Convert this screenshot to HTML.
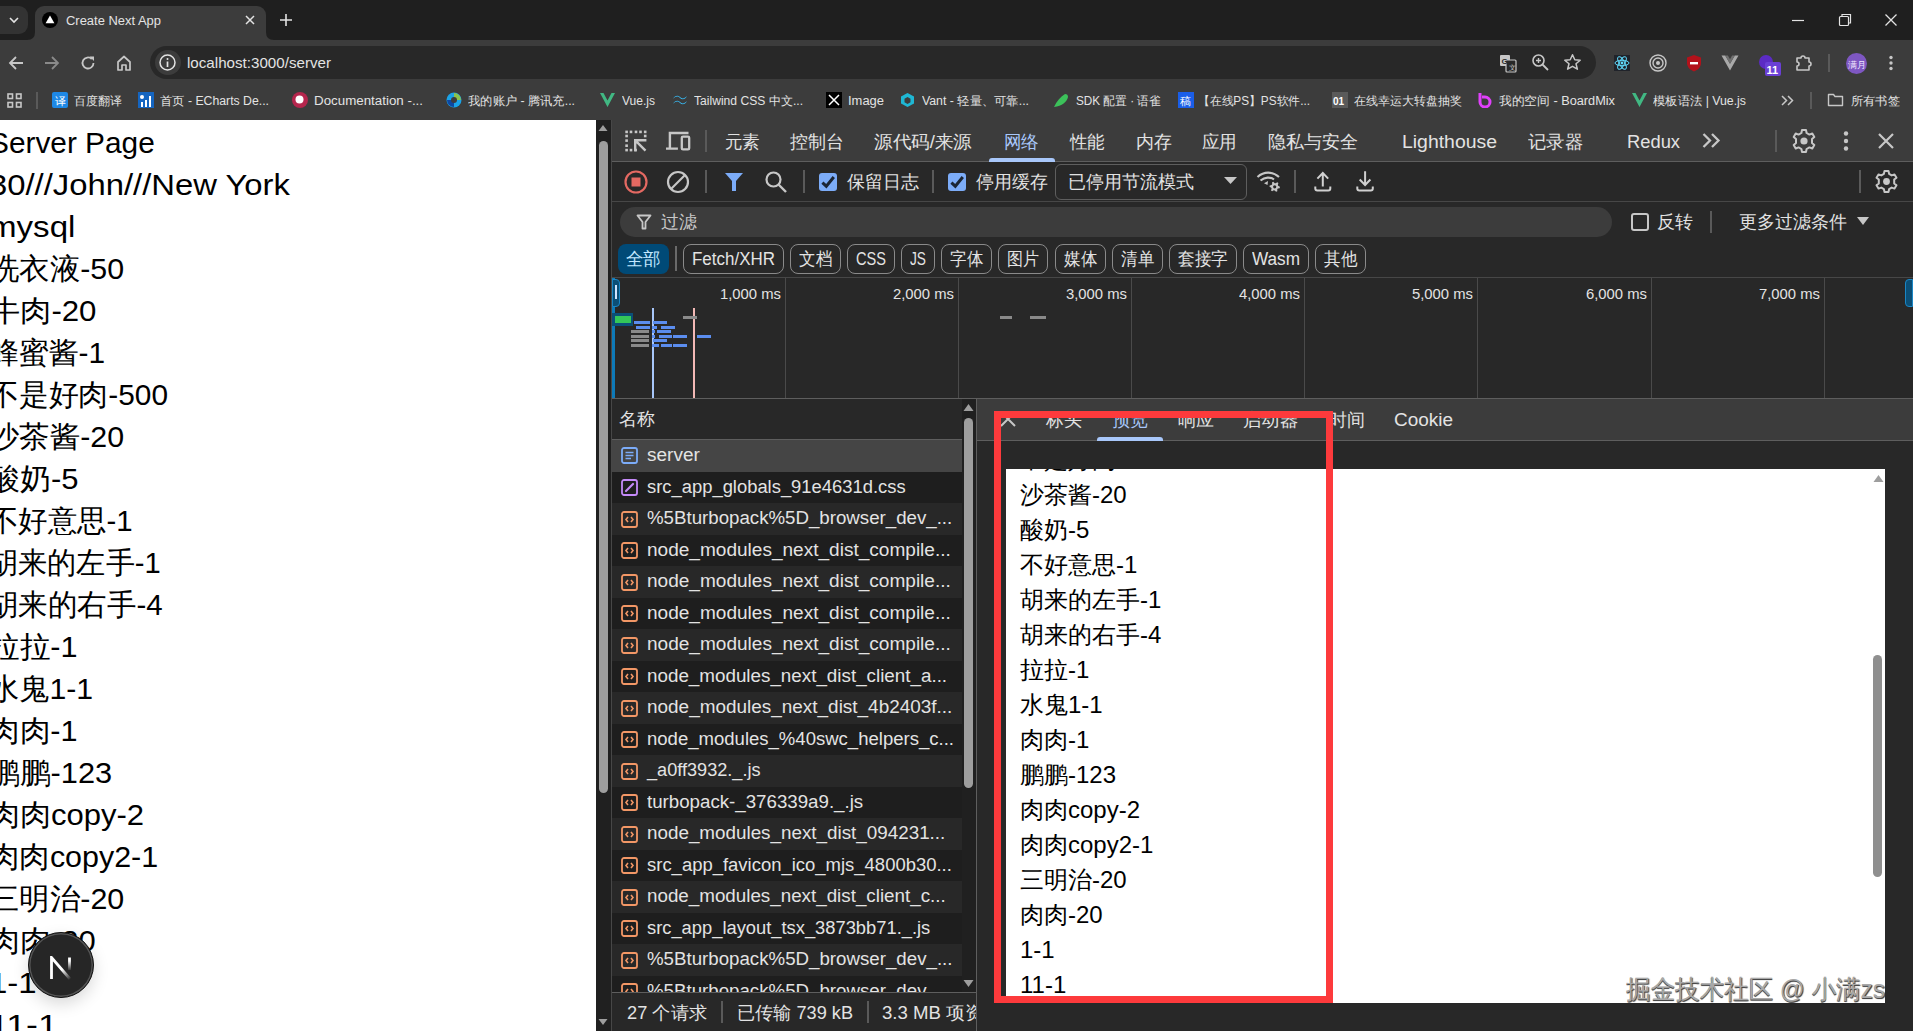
<!DOCTYPE html>
<html><head><meta charset="utf-8"><style>
html,body{margin:0;padding:0;width:1913px;height:1031px;overflow:hidden;background:#282828;font-family:"Liberation Sans", sans-serif;position:relative;}
</style></head><body>
<div style="position:absolute;left:0px;top:0px;width:1913px;height:40px;background:#1f1f1f;"></div>
<div style="position:absolute;left:0px;top:6px;width:28px;height:28px;background:#333333;border-radius:0 9px 9px 0;"></div>
<svg style="position:absolute;left:8px;top:14px;" width="12" height="12" viewBox="0 0 12 12"><path d="M2 4 L6 8 L10 4" stroke="#e3e3e3" stroke-width="1.6" fill="none"/></svg>
<div style="position:absolute;left:35px;top:6px;width:231px;height:34px;background:#3c3c3c;border-radius:9px 9px 0 0;"></div>
<svg style="position:absolute;left:27px;top:32px;" width="8" height="8" viewBox="0 0 8 8"><path d="M0 8 Q8 8 8 0 L8 8 Z" fill="#3c3c3c"/></svg>
<svg style="position:absolute;left:266px;top:32px;" width="8" height="8" viewBox="0 0 8 8"><path d="M8 8 Q0 8 0 0 L0 8 Z" fill="#3c3c3c"/></svg>
<svg style="position:absolute;left:42px;top:12px;" width="16" height="16" viewBox="0 0 16 16"><circle cx="8" cy="8" r="8" fill="#000"/><path d="M8 3.6 L12.4 11.2 L3.6 11.2 Z" fill="#fff"/></svg>
<span style="position:absolute;left:66.00px;top:15.42px;font-size:12.5px;line-height:1;color:#e3e3e3;white-space:nowrap;transform:scaleX(1.0358);transform-origin:0 0;">Create Next App</span>
<svg style="position:absolute;left:244px;top:14px;" width="12" height="12" viewBox="0 0 12 12"><path d="M2 2 L10 10 M10 2 L2 10" stroke="#e3e3e3" stroke-width="1.5"/></svg>
<svg style="position:absolute;left:279px;top:13px;" width="14" height="14" viewBox="0 0 14 14"><path d="M7 1 V13 M1 7 H13" stroke="#e3e3e3" stroke-width="1.6"/></svg>
<svg style="position:absolute;left:1791px;top:13px;" width="14" height="14" viewBox="0 0 14 14"><path d="M1 7.5 H13" stroke="#e3e3e3" stroke-width="1.2"/></svg>
<svg style="position:absolute;left:1838px;top:13px;" width="14" height="14" viewBox="0 0 14 14"><rect x="1.5" y="3.5" width="9" height="9" stroke="#e3e3e3" stroke-width="1.2" fill="none" rx="1"/><path d="M4 3.5 V1.5 H12.5 V10 H10.5" stroke="#e3e3e3" stroke-width="1.2" fill="none"/></svg>
<svg style="position:absolute;left:1884px;top:13px;" width="14" height="14" viewBox="0 0 14 14"><path d="M1.5 1.5 L12.5 12.5 M12.5 1.5 L1.5 12.5" stroke="#e3e3e3" stroke-width="1.3"/></svg>
<div style="position:absolute;left:0px;top:40px;width:1913px;height:80px;background:#3c3c3c;"></div>
<svg style="position:absolute;left:7px;top:54px;" width="18" height="18" viewBox="0 0 18 18"><path d="M16 9 H3 M9 3 L3 9 L9 15" stroke="#c7c7c7" stroke-width="1.8" fill="none"/></svg>
<svg style="position:absolute;left:43px;top:54px;" width="18" height="18" viewBox="0 0 18 18"><path d="M2 9 H15 M9 3 L15 9 L9 15" stroke="#8a8a8a" stroke-width="1.8" fill="none"/></svg>
<svg style="position:absolute;left:79px;top:54px;" width="18" height="18" viewBox="0 0 18 18"><path d="M14.5 9 A5.5 5.5 0 1 1 12.8 5" stroke="#c7c7c7" stroke-width="1.8" fill="none"/><path d="M10.5 2.5 H15 V7 Z" fill="#c7c7c7"/></svg>
<svg style="position:absolute;left:115px;top:54px;" width="18" height="18" viewBox="0 0 18 18"><path d="M3 8 L9 2.5 L15 8 V16 H11 V11 H7 V16 H3 Z" stroke="#c7c7c7" stroke-width="1.7" fill="none" stroke-linejoin="round"/></svg>
<div style="position:absolute;left:150px;top:46px;width:1446px;height:33px;background:#282828;border-radius:17px;"></div>
<div style="position:absolute;left:155px;top:50px;width:26px;height:25px;background:#3c3c3c;border-radius:13px;"></div>
<svg style="position:absolute;left:158px;top:53px;" width="19" height="19" viewBox="0 0 19 19"><circle cx="9.5" cy="9.5" r="7.5" stroke="#e3e3e3" stroke-width="1.5" fill="none"/><path d="M9.5 8.5 V14" stroke="#e3e3e3" stroke-width="1.7"/><circle cx="9.5" cy="6" r="1" fill="#e3e3e3"/></svg>
<span style="position:absolute;left:187.00px;top:55.30px;font-size:15px;line-height:1;color:#e3e3e3;white-space:nowrap;transform:scaleX(1.0099);transform-origin:0 0;">localhost:3000/server</span>
<svg style="position:absolute;left:1499px;top:54px;" width="19" height="19" viewBox="0 0 19 19"><rect x="1" y="1" width="10" height="11" rx="1" fill="#c7c7c7"/><rect x="7" y="6" width="10" height="12" rx="1" fill="#282828" stroke="#c7c7c7" stroke-width="1.2"/><text x="2.5" y="10" font-size="8" fill="#282828" font-family="Liberation Sans" font-weight="bold">G</text><text x="9.5" y="15.5" font-size="7" fill="#c7c7c7" font-family="Liberation Sans">文</text></svg>
<svg style="position:absolute;left:1531px;top:53px;" width="19" height="19" viewBox="0 0 19 19"><circle cx="7.5" cy="7.5" r="5.5" stroke="#c7c7c7" stroke-width="1.6" fill="none"/><path d="M11.5 11.5 L17 17" stroke="#c7c7c7" stroke-width="1.8"/><path d="M7.5 5 V10 M5 7.5 H10" stroke="#c7c7c7" stroke-width="1.4"/></svg>
<svg style="position:absolute;left:1563px;top:53px;" width="19" height="19" viewBox="0 0 19 19"><path d="M9.5 1.8 L11.8 6.8 L17.2 7.2 L13 10.8 L14.4 16.2 L9.5 13.3 L4.6 16.2 L6 10.8 L1.8 7.2 L7.2 6.8 Z" stroke="#c7c7c7" stroke-width="1.5" fill="none" stroke-linejoin="round"/></svg>
<div style="position:absolute;left:1614px;top:55px;width:16px;height:16px;background:#20232a;"></div>
<svg style="position:absolute;left:1614px;top:55px;" width="16" height="16" viewBox="0 0 16 16"><g stroke="#61dafb" stroke-width="1" fill="none"><ellipse cx="8" cy="8" rx="7" ry="2.7"/><ellipse cx="8" cy="8" rx="7" ry="2.7" transform="rotate(60 8 8)"/><ellipse cx="8" cy="8" rx="7" ry="2.7" transform="rotate(120 8 8)"/></g><circle cx="8" cy="8" r="1.4" fill="#61dafb"/></svg>
<svg style="position:absolute;left:1649px;top:54px;" width="18" height="18" viewBox="0 0 18 18"><circle cx="9" cy="9" r="8" stroke="#c7c7c7" stroke-width="1.4" fill="none"/><circle cx="9" cy="9" r="5" stroke="#c7c7c7" stroke-width="1.4" fill="none"/><circle cx="9" cy="9" r="2" fill="#c7c7c7"/></svg>
<svg style="position:absolute;left:1686px;top:54px;" width="16" height="18" viewBox="0 0 16 18"><path d="M8 1 L15 3.5 V9 C15 13 12 16 8 17.5 C4 16 1 13 1 9 V3.5 Z" fill="#b3121b"/><rect x="4" y="8" width="8" height="2.4" fill="#fff"/></svg>
<svg style="position:absolute;left:1721px;top:55px;" width="18" height="16" viewBox="0 0 18 16"><path d="M0.5 0.5 H4.2 L9 8.8 L13.8 0.5 H17.5 L9 15.5 Z" fill="#a9a9a9"/><path d="M4.2 0.5 H6.9 L9 4.2 L11.1 0.5 H13.8 L9 8.8 Z" fill="#6f6f6f"/></svg>
<svg style="position:absolute;left:1756px;top:52px;" width="26" height="26" viewBox="0 0 26 26"><circle cx="10" cy="10" r="7" fill="#5b2bc4"/><rect x="9" y="10" width="16" height="14" rx="2" fill="#6a3fd6"/><text x="10.5" y="22" font-size="11" font-weight="bold" fill="#fff" font-family="Liberation Sans">11</text></svg>
<svg style="position:absolute;left:1794px;top:54px;" width="19" height="18" viewBox="0 0 19 18"><path d="M3 4 H7 A2 2 0 0 1 11 4 H15 V8 A2 2 0 0 1 15 12 V16 H3 V12 A2 2 0 0 0 3 8 Z" stroke="#c7c7c7" stroke-width="1.6" fill="none" stroke-linejoin="round"/></svg>
<div style="position:absolute;left:1828px;top:54px;width:2px;height:18px;background:#5a5a5a;"></div>
<div style="position:absolute;left:1846px;top:53px;width:21px;height:21px;background:#7e57c2;border-radius:50%;"></div>
<span style="position:absolute;left:1848.00px;top:60.80px;font-size:8.5px;line-height:1;color:#f0e6ff;white-space:nowrap;">满月</span>
<svg style="position:absolute;left:1887px;top:55px;" width="8" height="16" viewBox="0 0 8 16"><circle cx="4" cy="2.5" r="1.7" fill="#c7c7c7"/><circle cx="4" cy="8" r="1.7" fill="#c7c7c7"/><circle cx="4" cy="13.5" r="1.7" fill="#c7c7c7"/></svg>
<svg style="position:absolute;left:7px;top:93px;" width="15" height="15" viewBox="0 0 15 15"><g fill="none" stroke="#c7c7c7" stroke-width="1.6"><rect x="1" y="1" width="4.5" height="4.5"/><rect x="9.5" y="1" width="4.5" height="4.5"/><rect x="1" y="9.5" width="4.5" height="4.5"/><rect x="9.5" y="9.5" width="4.5" height="4.5"/></g></svg>
<div style="position:absolute;left:36px;top:92px;width:2px;height:17px;background:#5a5a5a;"></div>
<div style="position:absolute;left:52px;top:92px;width:16px;height:16px;background:#1e88e5;border-radius:2px;"></div>
<span style="position:absolute;left:55.00px;top:95.69px;font-size:11px;line-height:1;color:#fff;white-space:nowrap;">译</span>
<span style="position:absolute;left:74.00px;top:94.84px;font-size:12px;line-height:1;color:#e3e3e3;white-space:nowrap;transform:scaleX(1.0000);transform-origin:0 0;">百度翻译</span>
<div style="position:absolute;left:138px;top:92px;width:16px;height:16px;background:#1565c0;"></div>
<svg style="position:absolute;left:138px;top:92px;" width="16" height="16" viewBox="0 0 16 16"><circle cx="4" cy="5" r="2" fill="#fff"/><rect x="3" y="10" width="2" height="5" fill="#fff"/><rect x="7" y="8" width="2" height="7" fill="#fff"/><rect x="11" y="4" width="2" height="11" fill="#fff"/></svg>
<span style="position:absolute;left:160.00px;top:94.84px;font-size:12px;line-height:1;color:#e3e3e3;white-space:nowrap;transform:scaleX(1.0217);transform-origin:0 0;">首页 - ECharts De...</span>
<svg style="position:absolute;left:292px;top:92px;" width="16" height="16" viewBox="0 0 16 16"><circle cx="8" cy="8" r="8" fill="#b5264d"/><circle cx="7.5" cy="7.5" r="4" fill="#fff"/></svg>
<span style="position:absolute;left:314.00px;top:94.84px;font-size:12px;line-height:1;color:#e3e3e3;white-space:nowrap;transform:scaleX(1.1117);transform-origin:0 0;">Documentation -...</span>
<svg style="position:absolute;left:446px;top:92px;" width="16" height="16" viewBox="0 0 16 16"><circle cx="8" cy="8" r="7.5" fill="#1aa3e8"/><path d="M8 1 A7 7 0 0 1 15 8 L8 8 Z" fill="#8bc34a"/><path d="M1 8 A7 7 0 0 0 8 15 L8 8Z" fill="#0d47a1"/><circle cx="8" cy="8" r="3" fill="#3c3c3c"/></svg>
<span style="position:absolute;left:468.00px;top:94.84px;font-size:12px;line-height:1;color:#e3e3e3;white-space:nowrap;transform:scaleX(1.0222);transform-origin:0 0;">我的账户 - 腾讯充...</span>
<svg style="position:absolute;left:600px;top:93px;" width="15" height="14" viewBox="0 0 15 14"><path d="M0 0 H3.5 L7.5 7.5 L11.5 0 H15 L7.5 14 Z" fill="#41b883"/></svg>
<span style="position:absolute;left:622.00px;top:94.84px;font-size:12px;line-height:1;color:#e3e3e3;white-space:nowrap;transform:scaleX(1.0028);transform-origin:0 0;">Vue.js</span>
<svg style="position:absolute;left:672px;top:94px;" width="16" height="12" viewBox="0 0 16 12"><path d="M1 5 C3 1 6 1 8 3 C10 5 12 5 15 2 C13 6 10 6 8 4 C6 2 4 2 1 5 Z M1 10 C3 6 6 6 8 8 C10 10 12 10 15 7 C13 11 10 11 8 9 C6 7 4 7 1 10 Z" fill="#38bdf8"/></svg>
<span style="position:absolute;left:694.00px;top:94.84px;font-size:12px;line-height:1;color:#e3e3e3;white-space:nowrap;transform:scaleX(1.0090);transform-origin:0 0;">Tailwind CSS 中文...</span>
<div style="position:absolute;left:826px;top:92px;width:16px;height:16px;background:#000;"></div>
<svg style="position:absolute;left:826px;top:92px;" width="16" height="16" viewBox="0 0 16 16"><path d="M3 3 L13 13 M13 3 L3 13" stroke="#fff" stroke-width="1.5"/></svg>
<span style="position:absolute;left:848.00px;top:94.84px;font-size:12px;line-height:1;color:#e3e3e3;white-space:nowrap;transform:scaleX(1.0792);transform-origin:0 0;">Image</span>
<svg style="position:absolute;left:900px;top:92px;" width="15" height="16" viewBox="0 0 15 16"><path d="M7.5 1 L14 4.5 V11.5 L7.5 15 L1 11.5 V4.5 Z" fill="#1fb7d4"/><path d="M7.5 5 L10.5 6.8 V10.2 L7.5 12 L4.5 10.2 V6.8Z" fill="#3c3c3c"/></svg>
<span style="position:absolute;left:922.00px;top:94.84px;font-size:12px;line-height:1;color:#e3e3e3;white-space:nowrap;transform:scaleX(1.0242);transform-origin:0 0;">Vant - 轻量、可靠...</span>
<svg style="position:absolute;left:1053px;top:92px;" width="16" height="16" viewBox="0 0 16 16"><path d="M1 15 C4 9 7 5 12 2 C14 2 15 3 15 5 C14 10 9 14 1 15 Z" fill="#3cc15a"/></svg>
<span style="position:absolute;left:1076.00px;top:94.84px;font-size:12px;line-height:1;color:#e3e3e3;white-space:nowrap;transform:scaleX(0.9807);transform-origin:0 0;">SDK 配置 · 语雀</span>
<div style="position:absolute;left:1178px;top:92px;width:16px;height:16px;background:#1a5ee8;"></div>
<span style="position:absolute;left:1180.00px;top:95.69px;font-size:11px;line-height:1;color:#fff;white-space:nowrap;">稿</span>
<span style="position:absolute;left:1198.00px;top:94.84px;font-size:12px;line-height:1;color:#e3e3e3;white-space:nowrap;transform:scaleX(0.9822);transform-origin:0 0;">【在线PS】PS软件...</span>
<div style="position:absolute;left:1332px;top:92px;width:16px;height:16px;background:#5a5a5a;"></div>
<span style="position:absolute;left:1333.00px;top:96.53px;font-size:10px;line-height:1;color:#fff;white-space:nowrap;font-weight:bold;">01</span>
<span style="position:absolute;left:1354.00px;top:94.84px;font-size:12px;line-height:1;color:#e3e3e3;white-space:nowrap;transform:scaleX(1.0000);transform-origin:0 0;">在线幸运大转盘抽奖</span>
<svg style="position:absolute;left:1478px;top:92px;" width="15" height="16" viewBox="0 0 15 16"><path d="M2 1 V10 A5 5 0 1 0 7 5 H4" stroke="#e040fb" stroke-width="3" fill="none"/></svg>
<span style="position:absolute;left:1499.00px;top:94.84px;font-size:12px;line-height:1;color:#e3e3e3;white-space:nowrap;transform:scaleX(1.0607);transform-origin:0 0;">我的空间 - BoardMix</span>
<svg style="position:absolute;left:1632px;top:93px;" width="15" height="14" viewBox="0 0 15 14"><path d="M0 0 H3.5 L7.5 7.5 L11.5 0 H15 L7.5 14 Z" fill="#41b883"/></svg>
<span style="position:absolute;left:1653.00px;top:94.84px;font-size:12px;line-height:1;color:#e3e3e3;white-space:nowrap;transform:scaleX(1.0253);transform-origin:0 0;">模板语法 | Vue.js</span>
<svg style="position:absolute;left:1781px;top:95px;" width="13" height="11" viewBox="0 0 13 11"><path d="M1 1 L5.5 5.5 L1 10 M7 1 L11.5 5.5 L7 10" stroke="#c7c7c7" stroke-width="1.5" fill="none"/></svg>
<div style="position:absolute;left:1810px;top:92px;width:2px;height:17px;background:#5a5a5a;"></div>
<svg style="position:absolute;left:1827px;top:93px;" width="17" height="14" viewBox="0 0 17 14"><path d="M1.5 1.5 H6.5 L8 3.5 H15.5 V12.5 H1.5 Z" stroke="#c7c7c7" stroke-width="1.4" fill="none" stroke-linejoin="round"/></svg>
<span style="position:absolute;left:1851.00px;top:94.84px;font-size:12px;line-height:1;color:#e3e3e3;white-space:nowrap;transform:scaleX(1.0208);transform-origin:0 0;">所有书签</span>
<div style="position:absolute;left:0px;top:120px;width:596px;height:911px;background:#ffffff;"></div>
<span style="position:absolute;left:-11.00px;top:127.61px;font-size:30px;line-height:1;color:#000;white-space:nowrap;transform:scaleX(0.9939);transform-origin:0 0;">Server Page</span>
<span style="position:absolute;left:-11.00px;top:169.60px;font-size:30px;line-height:1;color:#000;white-space:nowrap;transform:scaleX(1.0934);transform-origin:0 0;">30///John///New York</span>
<span style="position:absolute;left:-11.00px;top:211.60px;font-size:30px;line-height:1;color:#000;white-space:nowrap;transform:scaleX(1.1027);transform-origin:0 0;">mysql</span>
<span style="position:absolute;left:-11.00px;top:253.60px;font-size:30px;line-height:1;color:#000;white-space:nowrap;transform:scaleX(1.0130);transform-origin:0 0;">洗衣液-50</span>
<span style="position:absolute;left:-11.00px;top:295.61px;font-size:30px;line-height:1;color:#000;white-space:nowrap;transform:scaleX(1.0396);transform-origin:0 0;">牛肉-20</span>
<span style="position:absolute;left:-11.00px;top:337.61px;font-size:30px;line-height:1;color:#000;white-space:nowrap;transform:scaleX(0.9956);transform-origin:0 0;">蜂蜜酱-1</span>
<span style="position:absolute;left:-11.00px;top:379.61px;font-size:30px;line-height:1;color:#000;white-space:nowrap;transform:scaleX(0.9944);transform-origin:0 0;">不是好肉-500</span>
<span style="position:absolute;left:-11.00px;top:421.61px;font-size:30px;line-height:1;color:#000;white-space:nowrap;transform:scaleX(1.0130);transform-origin:0 0;">沙茶酱-20</span>
<span style="position:absolute;left:-11.00px;top:463.61px;font-size:30px;line-height:1;color:#000;white-space:nowrap;transform:scaleX(1.0333);transform-origin:0 0;">酸奶-5</span>
<span style="position:absolute;left:-11.00px;top:505.61px;font-size:30px;line-height:1;color:#000;white-space:nowrap;transform:scaleX(0.9792);transform-origin:0 0;">不好意思-1</span>
<span style="position:absolute;left:-11.00px;top:547.61px;font-size:30px;line-height:1;color:#000;white-space:nowrap;transform:scaleX(0.9713);transform-origin:0 0;">胡来的左手-1</span>
<span style="position:absolute;left:-11.00px;top:589.61px;font-size:30px;line-height:1;color:#000;white-space:nowrap;transform:scaleX(0.9829);transform-origin:0 0;">胡来的右手-4</span>
<span style="position:absolute;left:-11.00px;top:631.61px;font-size:30px;line-height:1;color:#000;white-space:nowrap;transform:scaleX(1.0202);transform-origin:0 0;">拉拉-1</span>
<span style="position:absolute;left:-11.00px;top:673.61px;font-size:30px;line-height:1;color:#000;white-space:nowrap;transform:scaleX(1.0069);transform-origin:0 0;">水鬼1-1</span>
<span style="position:absolute;left:-11.00px;top:715.61px;font-size:30px;line-height:1;color:#000;white-space:nowrap;transform:scaleX(1.0202);transform-origin:0 0;">肉肉-1</span>
<span style="position:absolute;left:-11.00px;top:757.61px;font-size:30px;line-height:1;color:#000;white-space:nowrap;transform:scaleX(1.0254);transform-origin:0 0;">鹏鹏-123</span>
<span style="position:absolute;left:-11.00px;top:799.61px;font-size:30px;line-height:1;color:#000;white-space:nowrap;transform:scaleX(1.0338);transform-origin:0 0;">肉肉copy-2</span>
<span style="position:absolute;left:-11.00px;top:841.61px;font-size:30px;line-height:1;color:#000;white-space:nowrap;transform:scaleX(1.0146);transform-origin:0 0;">肉肉copy2-1</span>
<span style="position:absolute;left:-11.00px;top:883.61px;font-size:30px;line-height:1;color:#000;white-space:nowrap;transform:scaleX(1.0145);transform-origin:0 0;">三明治-20</span>
<span style="position:absolute;left:-11.00px;top:925.61px;font-size:30px;line-height:1;color:#000;white-space:nowrap;transform:scaleX(1.0314);transform-origin:0 0;">肉肉-20</span>
<span style="position:absolute;left:-11.00px;top:967.61px;font-size:30px;line-height:1;color:#000;white-space:nowrap;transform:scaleX(1.1000);transform-origin:0 0;">1-1</span>
<span style="position:absolute;left:-11.00px;top:1009.61px;font-size:30px;line-height:1;color:#000;white-space:nowrap;transform:scaleX(1.1900);transform-origin:0 0;">11-1</span>
<div style="position:absolute;left:596px;top:120px;width:15px;height:911px;background:#202020;"></div>
<svg style="position:absolute;left:598px;top:124px;" width="10" height="8" viewBox="0 0 10 8"><path d="M5 1 L9.5 7 H0.5 Z" fill="#9e9e9e"/></svg>
<div style="position:absolute;left:599px;top:141px;width:9px;height:652px;background:#9e9e9e;border-radius:5px;"></div>
<svg style="position:absolute;left:598px;top:1018px;" width="10" height="8" viewBox="0 0 10 8"><path d="M5 7 L9.5 1 H0.5 Z" fill="#9e9e9e"/></svg>
<div style="position:absolute;left:28px;top:932px;width:66px;height:66px;border-radius:50%;background:#262626;border:1px solid #141414;box-sizing:border-box;box-shadow:inset 0 0 0 1.5px #555, 0 6px 16px rgba(0,0,0,0.15);"></div>
<svg style="position:absolute;left:49px;top:956px;" width="24" height="24" viewBox="0 0 24 24"><defs><linearGradient id="ng" gradientUnits="userSpaceOnUse" x1="2" y1="2" x2="22" y2="23"><stop offset="0.55" stop-color="#fff"/><stop offset="1" stop-color="#fff" stop-opacity="0"/></linearGradient><linearGradient id="ng2" gradientUnits="userSpaceOnUse" x1="0" y1="5" x2="0" y2="15"><stop offset="0" stop-color="#fff"/><stop offset="1" stop-color="#fff" stop-opacity="0"/></linearGradient></defs><path d="M2.5 23 V1.5 L21 23" stroke="url(#ng)" stroke-width="2.8" fill="none"/><path d="M20.5 1.5 V14" stroke="url(#ng2)" stroke-width="2.8" fill="none"/></svg>
<div style="position:absolute;left:611px;top:120px;width:1302px;height:911px;background:#282828;"></div>
<div style="position:absolute;left:611px;top:120px;width:1px;height:911px;background:#474747;"></div>
<div style="position:absolute;left:612px;top:120px;width:1301px;height:41px;background:#3c3c3c;"></div>
<div style="position:absolute;left:612px;top:161px;width:1301px;height:1px;background:#5e5e5e;"></div>
<svg style="position:absolute;left:624px;top:129px;" width="24" height="24" viewBox="0 0 24 24"><rect x="1.3" y="1.6" width="2.6" height="2.6" fill="#c7c7c7"/><rect x="5.7" y="1.6" width="2.6" height="2.6" fill="#c7c7c7"/><rect x="10.7" y="1.6" width="2.6" height="2.6" fill="#c7c7c7"/><rect x="15.2" y="1.6" width="2.6" height="2.6" fill="#c7c7c7"/><rect x="19.9" y="1.6" width="2.6" height="2.6" fill="#c7c7c7"/><rect x="1.3" y="5.7" width="2.6" height="2.6" fill="#c7c7c7"/><rect x="1.3" y="10.3" width="2.6" height="2.6" fill="#c7c7c7"/><rect x="1.3" y="15.4" width="2.6" height="2.6" fill="#c7c7c7"/><rect x="1.3" y="19.8" width="2.6" height="2.6" fill="#c7c7c7"/><rect x="19.9" y="5.7" width="2.6" height="2.6" fill="#c7c7c7"/><rect x="5.7" y="19.8" width="2.6" height="2.6" fill="#c7c7c7"/><rect x="10.3" y="19.8" width="2.6" height="2.6" fill="#c7c7c7"/><path d="M11.2 22.2 V11.3 H22.4 M12.5 12.6 L21.5 21.6" stroke="#c7c7c7" stroke-width="2.4" fill="none"/></svg>
<svg style="position:absolute;left:664px;top:129px;" width="28" height="24" viewBox="0 0 28 24"><path d="M5.9 19.6 V4 H24.5 M2 19.6 H13.9" stroke="#c7c7c7" stroke-width="2.4" fill="none"/><rect x="17.8" y="7.6" width="7.4" height="12.8" rx="1.2" stroke="#c7c7c7" stroke-width="2.3" fill="none"/></svg>
<div style="position:absolute;left:705px;top:130px;width:2px;height:22px;background:#5a5a5a;"></div>
<span style="position:absolute;left:725.00px;top:133.26px;font-size:18px;line-height:1;color:#e3e3e3;white-space:nowrap;transform:scaleX(0.9722);transform-origin:0 0;">元素</span>
<span style="position:absolute;left:790.00px;top:133.26px;font-size:18px;line-height:1;color:#e3e3e3;white-space:nowrap;transform:scaleX(1.0000);transform-origin:0 0;">控制台</span>
<span style="position:absolute;left:874.00px;top:133.26px;font-size:18px;line-height:1;color:#e3e3e3;white-space:nowrap;transform:scaleX(1.0314);transform-origin:0 0;">源代码/来源</span>
<span style="position:absolute;left:1004.00px;top:133.26px;font-size:18px;line-height:1;color:#a8c7fa;white-space:nowrap;transform:scaleX(0.9722);transform-origin:0 0;">网络</span>
<span style="position:absolute;left:1070.00px;top:133.26px;font-size:18px;line-height:1;color:#e3e3e3;white-space:nowrap;transform:scaleX(0.9722);transform-origin:0 0;">性能</span>
<span style="position:absolute;left:1136.00px;top:133.26px;font-size:18px;line-height:1;color:#e3e3e3;white-space:nowrap;transform:scaleX(1.0000);transform-origin:0 0;">内存</span>
<span style="position:absolute;left:1202.00px;top:133.26px;font-size:18px;line-height:1;color:#e3e3e3;white-space:nowrap;transform:scaleX(0.9722);transform-origin:0 0;">应用</span>
<span style="position:absolute;left:1268.00px;top:133.26px;font-size:18px;line-height:1;color:#e3e3e3;white-space:nowrap;transform:scaleX(1.0000);transform-origin:0 0;">隐私与安全</span>
<span style="position:absolute;left:1402.00px;top:133.26px;font-size:18px;line-height:1;color:#e3e3e3;white-space:nowrap;transform:scaleX(1.0786);transform-origin:0 0;">Lighthouse</span>
<span style="position:absolute;left:1528.00px;top:133.26px;font-size:18px;line-height:1;color:#e3e3e3;white-space:nowrap;transform:scaleX(1.0185);transform-origin:0 0;">记录器</span>
<span style="position:absolute;left:1627.00px;top:133.26px;font-size:18px;line-height:1;color:#e3e3e3;white-space:nowrap;transform:scaleX(1.0186);transform-origin:0 0;">Redux</span>
<div style="position:absolute;left:989px;top:158px;width:66px;height:4px;background:#a8c7fa;border-radius:3px 3px 0 0;"></div>
<svg style="position:absolute;left:1701px;top:132px;" width="22" height="18" viewBox="0 0 22 18"><path d="M2.5 2 L9 8.5 L2.5 15 M11 2 L17.5 8.5 L11 15" stroke="#c7c7c7" stroke-width="2.3" fill="none"/></svg>
<div style="position:absolute;left:1775px;top:130px;width:2px;height:22px;background:#5a5a5a;"></div>
<svg style="position:absolute;left:1791px;top:128px;" width="26" height="26" viewBox="0 0 26 26"><g transform="translate(13 13)"><path d="M-2 -11 H2 L2.6 -8 L5.4 -6.4 L8.3 -7.5 L10.3 -4 L8 -2 V2 L10.3 4 L8.3 7.5 L5.4 6.4 L2.6 8 L2 11 H-2 L-2.6 8 L-5.4 6.4 L-8.3 7.5 L-10.3 4 L-8 2 V-2 L-10.3 -4 L-8.3 -7.5 L-5.4 -6.4 L-2.6 -8 Z" stroke="#c7c7c7" stroke-width="2" fill="none" stroke-linejoin="round"/><circle r="3.6" fill="#c7c7c7"/></g></svg>
<svg style="position:absolute;left:1842px;top:130px;" width="8" height="22" viewBox="0 0 8 22"><circle cx="4" cy="3.5" r="2.2" fill="#c7c7c7"/><circle cx="4" cy="11" r="2.2" fill="#c7c7c7"/><circle cx="4" cy="18.5" r="2.2" fill="#c7c7c7"/></svg>
<svg style="position:absolute;left:1877px;top:132px;" width="18" height="18" viewBox="0 0 18 18"><path d="M2 2 L16 16 M16 2 L2 16" stroke="#c7c7c7" stroke-width="2.2"/></svg>
<div style="position:absolute;left:612px;top:201px;width:1301px;height:1px;background:#474747;"></div>
<svg style="position:absolute;left:624px;top:170px;" width="24" height="24" viewBox="0 0 24 24"><circle cx="12" cy="12" r="10.5" stroke="#e46962" stroke-width="2.2" fill="none"/><rect x="7.5" y="7.5" width="9" height="9" fill="#e46962"/></svg>
<svg style="position:absolute;left:666px;top:170px;" width="24" height="24" viewBox="0 0 24 24"><circle cx="12" cy="12" r="10" stroke="#c7c7c7" stroke-width="2.2" fill="none"/><path d="M5 19 L19 5" stroke="#c7c7c7" stroke-width="2.2"/></svg>
<div style="position:absolute;left:705px;top:170px;width:2px;height:23px;background:#5a5a5a;"></div>
<svg style="position:absolute;left:724px;top:172px;" width="20" height="20" viewBox="0 0 20 20"><path d="M1 1 H19 L12 9 V19 H8 V9 Z" fill="#7cacf8"/></svg>
<svg style="position:absolute;left:764px;top:170px;" width="24" height="24" viewBox="0 0 24 24"><circle cx="9.5" cy="9.5" r="7" stroke="#c7c7c7" stroke-width="2.2" fill="none"/><path d="M14.5 14.5 L22 22" stroke="#c7c7c7" stroke-width="2.4"/></svg>
<div style="position:absolute;left:803px;top:170px;width:2px;height:23px;background:#5a5a5a;"></div>
<svg style="position:absolute;left:819px;top:173px;" width="19" height="19" viewBox="0 0 19 19"><rect x="0" y="0" width="18" height="18" rx="3" fill="#7cacf8"/><path d="M3.4 9.6 L7.3 13.2 L14.8 4" stroke="#1b2636" stroke-width="3" fill="none"/></svg>
<span style="position:absolute;left:847.00px;top:172.76px;font-size:18px;line-height:1;color:#e3e3e3;white-space:nowrap;transform:scaleX(1.0000);transform-origin:0 0;">保留日志</span>
<div style="position:absolute;left:932px;top:170px;width:2px;height:23px;background:#5a5a5a;"></div>
<svg style="position:absolute;left:948px;top:173px;" width="19" height="19" viewBox="0 0 19 19"><rect x="0" y="0" width="18" height="18" rx="3" fill="#7cacf8"/><path d="M3.4 9.6 L7.3 13.2 L14.8 4" stroke="#1b2636" stroke-width="3" fill="none"/></svg>
<span style="position:absolute;left:976.00px;top:172.76px;font-size:18px;line-height:1;color:#e3e3e3;white-space:nowrap;transform:scaleX(1.0000);transform-origin:0 0;">停用缓存</span>
<div style="position:absolute;left:1055px;top:164px;width:192px;height:36px;background:transparent;border:1.5px solid #5e5e5e;border-radius:6px;box-sizing:border-box;"></div>
<span style="position:absolute;left:1068.00px;top:172.76px;font-size:18px;line-height:1;color:#e3e3e3;white-space:nowrap;transform:scaleX(1.0000);transform-origin:0 0;">已停用节流模式</span>
<svg style="position:absolute;left:1224px;top:177px;" width="13" height="8" viewBox="0 0 13 8"><path d="M0 0 H13 L6.5 7 Z" fill="#c7c7c7"/></svg>
<svg style="position:absolute;left:1255px;top:170px;" width="28" height="24" viewBox="0 0 28 24"><path d="M2.5 7 C9 1.2 17.5 1.2 24 7" stroke="#c7c7c7" stroke-width="2.2" fill="none"/><path d="M5.5 10.5 C10 6.8 15.5 6.8 19 9.5" stroke="#c7c7c7" stroke-width="2.2" fill="none"/><path d="M9 13.2 L13 11 L12.5 15 Z" fill="#c7c7c7"/><path d="M24.90 16.80 L24.72 18.15 L22.82 18.60 L22.25 19.35 L22.30 21.30 L21.05 21.82 L19.70 20.40 L18.77 20.28 L17.10 21.30 L16.02 20.48 L16.58 18.60 L16.22 17.73 L14.50 16.80 L14.68 15.45 L16.58 15.00 L17.15 14.25 L17.10 12.30 L18.35 11.78 L19.70 13.20 L20.63 13.32 L22.30 12.30 L23.38 13.12 L22.82 15.00 L23.18 15.87 Z" fill="#c7c7c7"/><circle cx="19.7" cy="16.8" r="1.6" fill="#282828"/></svg>
<div style="position:absolute;left:1294px;top:170px;width:2px;height:23px;background:#5a5a5a;"></div>
<svg style="position:absolute;left:1312px;top:170px;" width="22" height="22" viewBox="0 0 22 22"><path d="M10.8 16.4 V3 M5.4 8.6 L10.8 3 L16.2 8.6" stroke="#d0d0d0" stroke-width="2" fill="none"/><path d="M3.3 16.6 V18.4 Q3.3 20.4 5.3 20.4 H16.3 Q18.3 20.4 18.3 18.4 V16.6" stroke="#d0d0d0" stroke-width="2" fill="none"/></svg>
<svg style="position:absolute;left:1355px;top:170px;" width="22" height="22" viewBox="0 0 22 22"><path d="M10.1 1.3 V15 M4.7 9.5 L10.1 15 L15.4 9.5" stroke="#d0d0d0" stroke-width="2" fill="none"/><path d="M2.3 16.6 V18.4 Q2.3 20.4 4.3 20.4 H15.8 Q17.8 20.4 17.8 18.4 V16.6" stroke="#d0d0d0" stroke-width="2" fill="none"/></svg>
<div style="position:absolute;left:1859px;top:170px;width:2px;height:23px;background:#5a5a5a;"></div>
<svg style="position:absolute;left:1874px;top:169px;" width="25" height="25" viewBox="0 0 25 25"><g transform="translate(12.5 12.5)"><path d="M-2 -10.5 H2 L2.6 -7.6 L5.2 -6.1 L8 -7.1 L10 -3.8 L7.7 -1.9 V1.9 L10 3.8 L8 7.1 L5.2 6.1 L2.6 7.6 L2 10.5 H-2 L-2.6 7.6 L-5.2 6.1 L-8 7.1 L-10 3.8 L-7.7 1.9 V-1.9 L-10 -3.8 L-8 -7.1 L-5.2 -6.1 L-2.6 -7.6 Z" stroke="#c7c7c7" stroke-width="2" fill="none" stroke-linejoin="round"/><circle r="3.4" fill="#c7c7c7"/></g></svg>
<div style="position:absolute;left:620px;top:207px;width:992px;height:30px;background:#3c3c3c;border-radius:15px;"></div>
<svg style="position:absolute;left:636px;top:214px;" width="16" height="16" viewBox="0 0 16 16"><path d="M1.5 1.5 H14.5 L9.5 8 V14.5 H6.5 V8 Z" stroke="#c7c7c7" stroke-width="1.8" fill="none" stroke-linejoin="round"/></svg>
<span style="position:absolute;left:661.00px;top:213.26px;font-size:18px;line-height:1;color:#c7c7c7;white-space:nowrap;transform:scaleX(1.0000);transform-origin:0 0;">过滤</span>
<div style="position:absolute;left:1631px;top:213px;width:18px;height:18px;background:transparent;border:2px solid #c7c7c7;border-radius:3px;box-sizing:border-box;"></div>
<span style="position:absolute;left:1657.00px;top:213.26px;font-size:18px;line-height:1;color:#e3e3e3;white-space:nowrap;transform:scaleX(1.0000);transform-origin:0 0;">反转</span>
<div style="position:absolute;left:1710px;top:211px;width:2px;height:22px;background:#5a5a5a;"></div>
<span style="position:absolute;left:1739.00px;top:213.26px;font-size:18px;line-height:1;color:#e3e3e3;white-space:nowrap;transform:scaleX(1.0000);transform-origin:0 0;">更多过滤条件</span>
<svg style="position:absolute;left:1857px;top:217px;" width="12" height="9" viewBox="0 0 12 9"><path d="M0 0 H12 L6 8 Z" fill="#c7c7c7"/></svg>
<div style="position:absolute;left:618px;top:244px;width:51px;height:30px;background:#004a77;border-radius:8px;"></div>
<span style="position:absolute;left:626.00px;top:250.26px;font-size:18px;line-height:1;color:#c2e7ff;white-space:nowrap;transform:scaleX(0.9722);transform-origin:0 0;">全部</span>
<div style="position:absolute;left:675px;top:246px;width:2px;height:25px;background:#6a6a6a;"></div>
<div style="position:absolute;left:683px;top:244px;width:101px;height:30px;background:transparent;border:1px solid #8a8a8a;border-radius:8px;box-sizing:border-box;"></div>
<span style="position:absolute;left:692.00px;top:250.26px;font-size:18px;line-height:1;color:#e3e3e3;white-space:nowrap;transform:scaleX(0.9428);transform-origin:0 0;">Fetch/XHR</span>
<div style="position:absolute;left:790px;top:244px;width:51px;height:30px;background:transparent;border:1px solid #8a8a8a;border-radius:8px;box-sizing:border-box;"></div>
<span style="position:absolute;left:799.00px;top:250.26px;font-size:18px;line-height:1;color:#e3e3e3;white-space:nowrap;transform:scaleX(0.9167);transform-origin:0 0;">文档</span>
<div style="position:absolute;left:847px;top:244px;width:48px;height:30px;background:transparent;border:1px solid #8a8a8a;border-radius:8px;box-sizing:border-box;"></div>
<span style="position:absolute;left:856.00px;top:250.26px;font-size:18px;line-height:1;color:#e3e3e3;white-space:nowrap;transform:scaleX(0.8105);transform-origin:0 0;">CSS</span>
<div style="position:absolute;left:901px;top:244px;width:34px;height:30px;background:transparent;border:1px solid #8a8a8a;border-radius:8px;box-sizing:border-box;"></div>
<span style="position:absolute;left:910.00px;top:250.26px;font-size:18px;line-height:1;color:#e3e3e3;white-space:nowrap;transform:scaleX(0.7613);transform-origin:0 0;">JS</span>
<div style="position:absolute;left:941px;top:244px;width:51px;height:30px;background:transparent;border:1px solid #8a8a8a;border-radius:8px;box-sizing:border-box;"></div>
<span style="position:absolute;left:950.00px;top:250.26px;font-size:18px;line-height:1;color:#e3e3e3;white-space:nowrap;transform:scaleX(0.9167);transform-origin:0 0;">字体</span>
<div style="position:absolute;left:998px;top:244px;width:50px;height:30px;background:transparent;border:1px solid #8a8a8a;border-radius:8px;box-sizing:border-box;"></div>
<span style="position:absolute;left:1007.00px;top:250.26px;font-size:18px;line-height:1;color:#e3e3e3;white-space:nowrap;transform:scaleX(0.8889);transform-origin:0 0;">图片</span>
<div style="position:absolute;left:1055px;top:244px;width:51px;height:30px;background:transparent;border:1px solid #8a8a8a;border-radius:8px;box-sizing:border-box;"></div>
<span style="position:absolute;left:1064.00px;top:250.26px;font-size:18px;line-height:1;color:#e3e3e3;white-space:nowrap;transform:scaleX(0.9167);transform-origin:0 0;">媒体</span>
<div style="position:absolute;left:1112px;top:244px;width:51px;height:30px;background:transparent;border:1px solid #8a8a8a;border-radius:8px;box-sizing:border-box;"></div>
<span style="position:absolute;left:1121.00px;top:250.26px;font-size:18px;line-height:1;color:#e3e3e3;white-space:nowrap;transform:scaleX(0.9167);transform-origin:0 0;">清单</span>
<div style="position:absolute;left:1169px;top:244px;width:68px;height:30px;background:transparent;border:1px solid #8a8a8a;border-radius:8px;box-sizing:border-box;"></div>
<span style="position:absolute;left:1178.00px;top:250.26px;font-size:18px;line-height:1;color:#e3e3e3;white-space:nowrap;transform:scaleX(0.9259);transform-origin:0 0;">套接字</span>
<div style="position:absolute;left:1243px;top:244px;width:66px;height:30px;background:transparent;border:1px solid #8a8a8a;border-radius:8px;box-sizing:border-box;"></div>
<span style="position:absolute;left:1252.00px;top:250.26px;font-size:18px;line-height:1;color:#e3e3e3;white-space:nowrap;transform:scaleX(0.9537);transform-origin:0 0;">Wasm</span>
<div style="position:absolute;left:1315px;top:244px;width:51px;height:30px;background:transparent;border:1px solid #8a8a8a;border-radius:8px;box-sizing:border-box;"></div>
<span style="position:absolute;left:1324.00px;top:250.26px;font-size:18px;line-height:1;color:#e3e3e3;white-space:nowrap;transform:scaleX(0.9167);transform-origin:0 0;">其他</span>
<div style="position:absolute;left:612px;top:277px;width:1301px;height:1px;background:#474747;"></div>
<div style="position:absolute;left:785px;top:278px;width:1px;height:120px;background:#4a4a4a;"></div>
<span style="position:absolute;left:720.00px;top:286.30px;font-size:15px;line-height:1;color:#e3e3e3;white-space:nowrap;transform:scaleX(0.9886);transform-origin:0 0;">1,000 ms</span>
<div style="position:absolute;left:958px;top:278px;width:1px;height:120px;background:#4a4a4a;"></div>
<span style="position:absolute;left:893.00px;top:286.30px;font-size:15px;line-height:1;color:#e3e3e3;white-space:nowrap;transform:scaleX(0.9886);transform-origin:0 0;">2,000 ms</span>
<div style="position:absolute;left:1131px;top:278px;width:1px;height:120px;background:#4a4a4a;"></div>
<span style="position:absolute;left:1066.00px;top:286.30px;font-size:15px;line-height:1;color:#e3e3e3;white-space:nowrap;transform:scaleX(0.9886);transform-origin:0 0;">3,000 ms</span>
<div style="position:absolute;left:1304px;top:278px;width:1px;height:120px;background:#4a4a4a;"></div>
<span style="position:absolute;left:1239.00px;top:286.30px;font-size:15px;line-height:1;color:#e3e3e3;white-space:nowrap;transform:scaleX(0.9886);transform-origin:0 0;">4,000 ms</span>
<div style="position:absolute;left:1477px;top:278px;width:1px;height:120px;background:#4a4a4a;"></div>
<span style="position:absolute;left:1412.00px;top:286.30px;font-size:15px;line-height:1;color:#e3e3e3;white-space:nowrap;transform:scaleX(0.9886);transform-origin:0 0;">5,000 ms</span>
<div style="position:absolute;left:1651px;top:278px;width:1px;height:120px;background:#4a4a4a;"></div>
<span style="position:absolute;left:1586.00px;top:286.30px;font-size:15px;line-height:1;color:#e3e3e3;white-space:nowrap;transform:scaleX(0.9886);transform-origin:0 0;">6,000 ms</span>
<div style="position:absolute;left:1824px;top:278px;width:1px;height:120px;background:#4a4a4a;"></div>
<span style="position:absolute;left:1759.00px;top:286.30px;font-size:15px;line-height:1;color:#e3e3e3;white-space:nowrap;transform:scaleX(0.9886);transform-origin:0 0;">7,000 ms</span>
<div style="position:absolute;left:612px;top:398px;width:1301px;height:1px;background:#5e5e5e;"></div>
<div style="position:absolute;left:612px;top:278px;width:3px;height:120px;background:#0e7ab8;"></div>
<div style="position:absolute;left:612px;top:279px;width:8px;height:28px;background:#0b4f77;border-radius:0 4px 4px 0;border:1px solid #1a86c5;box-sizing:border-box;"></div>
<div style="position:absolute;left:615px;top:285px;width:2px;height:14px;background:#d0e4ff;"></div>
<div style="position:absolute;left:1905px;top:279px;width:8px;height:28px;background:#0b4f77;border-radius:4px 0 0 4px;border:1px solid #1a86c5;box-sizing:border-box;"></div>
<div style="position:absolute;left:652px;top:308px;width:2px;height:90px;background:#a8c7fa;"></div>
<div style="position:absolute;left:693px;top:308px;width:2px;height:90px;background:#f2b8b5;"></div>
<div style="position:absolute;left:612px;top:313px;width:21px;height:13px;background:#0b4f77;"></div>
<div style="position:absolute;left:615px;top:316px;width:16px;height:7px;background:#34c759;"></div>
<div style="position:absolute;left:634px;top:321px;width:16px;height:3px;background:#5b8def;"></div>
<div style="position:absolute;left:653px;top:321px;width:14px;height:3px;background:#5b8def;"></div>
<div style="position:absolute;left:636px;top:326px;width:14px;height:3px;background:#5b8def;"></div>
<div style="position:absolute;left:652px;top:326px;width:5px;height:3px;background:#5b8def;"></div>
<div style="position:absolute;left:661px;top:326px;width:14px;height:3px;background:#5b8def;"></div>
<div style="position:absolute;left:652px;top:330px;width:3px;height:3px;background:#5b8def;"></div>
<div style="position:absolute;left:657px;top:330px;width:14px;height:3px;background:#5b8def;"></div>
<div style="position:absolute;left:652px;top:335px;width:3px;height:3px;background:#5b8def;"></div>
<div style="position:absolute;left:659px;top:335px;width:13px;height:3px;background:#5b8def;"></div>
<div style="position:absolute;left:673px;top:335px;width:14px;height:3px;background:#5b8def;"></div>
<div style="position:absolute;left:697px;top:335px;width:14px;height:3px;background:#5b8def;"></div>
<div style="position:absolute;left:653px;top:339px;width:14px;height:3px;background:#5b8def;"></div>
<div style="position:absolute;left:652px;top:344px;width:7px;height:3px;background:#5b8def;"></div>
<div style="position:absolute;left:661px;top:344px;width:11px;height:3px;background:#5b8def;"></div>
<div style="position:absolute;left:673px;top:344px;width:14px;height:3px;background:#5b8def;"></div>
<div style="position:absolute;left:683px;top:316px;width:14px;height:3px;background:#8a8a8a;"></div>
<div style="position:absolute;left:631px;top:330px;width:18px;height:3px;background:#8a8a8a;"></div>
<div style="position:absolute;left:631px;top:335px;width:18px;height:3px;background:#8a8a8a;"></div>
<div style="position:absolute;left:631px;top:339px;width:18px;height:3px;background:#8a8a8a;"></div>
<div style="position:absolute;left:631px;top:344px;width:18px;height:3px;background:#8a8a8a;"></div>
<div style="position:absolute;left:1000px;top:316px;width:12px;height:3px;background:#8a8a8a;"></div>
<div style="position:absolute;left:1030px;top:316px;width:16px;height:3px;background:#8a8a8a;"></div>
<div style="position:absolute;left:612px;top:399px;width:350px;height:40px;background:#282828;"></div>
<span style="position:absolute;left:619.00px;top:410.26px;font-size:18px;line-height:1;color:#e3e3e3;white-space:nowrap;transform:scaleX(1.0000);transform-origin:0 0;">名称</span>
<div style="position:absolute;left:612px;top:439px;width:350px;height:1px;background:#5e5e5e;"></div>
<div style="position:absolute;left:612px;top:440.0px;width:350px;height:32.0px;background:#454545;"></div>
<div style="position:absolute;left:612px;top:471.5px;width:350px;height:32.0px;background:#1e1e1e;"></div>
<div style="position:absolute;left:612px;top:503.0px;width:350px;height:32.0px;background:#282828;"></div>
<div style="position:absolute;left:612px;top:534.5px;width:350px;height:32.0px;background:#1e1e1e;"></div>
<div style="position:absolute;left:612px;top:566.0px;width:350px;height:32.0px;background:#282828;"></div>
<div style="position:absolute;left:612px;top:597.5px;width:350px;height:32.0px;background:#1e1e1e;"></div>
<div style="position:absolute;left:612px;top:629.0px;width:350px;height:32.0px;background:#282828;"></div>
<div style="position:absolute;left:612px;top:660.5px;width:350px;height:32.0px;background:#1e1e1e;"></div>
<div style="position:absolute;left:612px;top:692.0px;width:350px;height:32.0px;background:#282828;"></div>
<div style="position:absolute;left:612px;top:723.5px;width:350px;height:32.0px;background:#1e1e1e;"></div>
<div style="position:absolute;left:612px;top:755.0px;width:350px;height:32.0px;background:#282828;"></div>
<div style="position:absolute;left:612px;top:786.5px;width:350px;height:32.0px;background:#1e1e1e;"></div>
<div style="position:absolute;left:612px;top:818.0px;width:350px;height:32.0px;background:#282828;"></div>
<div style="position:absolute;left:612px;top:849.5px;width:350px;height:32.0px;background:#1e1e1e;"></div>
<div style="position:absolute;left:612px;top:881.0px;width:350px;height:32.0px;background:#282828;"></div>
<div style="position:absolute;left:612px;top:912.5px;width:350px;height:32.0px;background:#1e1e1e;"></div>
<div style="position:absolute;left:612px;top:944.0px;width:350px;height:32.0px;background:#282828;"></div>
<div style="position:absolute;left:612px;top:975.5px;width:350px;height:17.0px;background:#1e1e1e;"></div>
<svg style="position:absolute;left:621px;top:447px;" width="17" height="17" viewBox="0 0 17 17"><rect x="1" y="1" width="15" height="15" rx="2" stroke="#7cacf8" stroke-width="1.8" fill="none"/><path d="M4.5 5.5 H12.5 M4.5 8.5 H12.5 M4.5 11.5 H10" stroke="#7cacf8" stroke-width="1.6"/></svg>
<span style="position:absolute;left:647.00px;top:446.26px;font-size:18px;line-height:1;color:#e3e3e3;white-space:nowrap;transform:scaleX(1.0551);transform-origin:0 0;">server</span>
<svg style="position:absolute;left:621px;top:479.0px;" width="17" height="17" viewBox="0 0 17 17"><rect x="1" y="1" width="15" height="15" rx="2" stroke="#c58af9" stroke-width="1.8" fill="none"/><path d="M5 12 L12 5" stroke="#c58af9" stroke-width="2.2" stroke-linecap="round"/></svg>
<span style="position:absolute;left:647.00px;top:477.76px;font-size:18px;line-height:1;color:#e3e3e3;white-space:nowrap;transform:scaleX(1.0214);transform-origin:0 0;">src_app_globals_91e4631d.css</span>
<svg style="position:absolute;left:621px;top:510.5px;" width="17" height="17" viewBox="0 0 17 17"><rect x="1" y="1" width="15" height="15" rx="2" stroke="#f29766" stroke-width="1.8" fill="none"/><path d="M7 6 L5 8.5 L7 11 M10 6 L12 8.5 L10 11" stroke="#f29766" stroke-width="1.6" fill="none"/></svg>
<span style="position:absolute;left:647.00px;top:509.26px;font-size:18px;line-height:1;color:#e3e3e3;white-space:nowrap;transform:scaleX(1.0377);transform-origin:0 0;">%5Bturbopack%5D_browser_dev_...</span>
<svg style="position:absolute;left:621px;top:542.0px;" width="17" height="17" viewBox="0 0 17 17"><rect x="1" y="1" width="15" height="15" rx="2" stroke="#f29766" stroke-width="1.8" fill="none"/><path d="M7 6 L5 8.5 L7 11 M10 6 L12 8.5 L10 11" stroke="#f29766" stroke-width="1.6" fill="none"/></svg>
<span style="position:absolute;left:647.00px;top:540.76px;font-size:18px;line-height:1;color:#e3e3e3;white-space:nowrap;transform:scaleX(1.0579);transform-origin:0 0;">node_modules_next_dist_compile...</span>
<svg style="position:absolute;left:621px;top:573.5px;" width="17" height="17" viewBox="0 0 17 17"><rect x="1" y="1" width="15" height="15" rx="2" stroke="#f29766" stroke-width="1.8" fill="none"/><path d="M7 6 L5 8.5 L7 11 M10 6 L12 8.5 L10 11" stroke="#f29766" stroke-width="1.6" fill="none"/></svg>
<span style="position:absolute;left:647.00px;top:572.26px;font-size:18px;line-height:1;color:#e3e3e3;white-space:nowrap;transform:scaleX(1.0579);transform-origin:0 0;">node_modules_next_dist_compile...</span>
<svg style="position:absolute;left:621px;top:605.0px;" width="17" height="17" viewBox="0 0 17 17"><rect x="1" y="1" width="15" height="15" rx="2" stroke="#f29766" stroke-width="1.8" fill="none"/><path d="M7 6 L5 8.5 L7 11 M10 6 L12 8.5 L10 11" stroke="#f29766" stroke-width="1.6" fill="none"/></svg>
<span style="position:absolute;left:647.00px;top:603.76px;font-size:18px;line-height:1;color:#e3e3e3;white-space:nowrap;transform:scaleX(1.0579);transform-origin:0 0;">node_modules_next_dist_compile...</span>
<svg style="position:absolute;left:621px;top:636.5px;" width="17" height="17" viewBox="0 0 17 17"><rect x="1" y="1" width="15" height="15" rx="2" stroke="#f29766" stroke-width="1.8" fill="none"/><path d="M7 6 L5 8.5 L7 11 M10 6 L12 8.5 L10 11" stroke="#f29766" stroke-width="1.6" fill="none"/></svg>
<span style="position:absolute;left:647.00px;top:635.26px;font-size:18px;line-height:1;color:#e3e3e3;white-space:nowrap;transform:scaleX(1.0579);transform-origin:0 0;">node_modules_next_dist_compile...</span>
<svg style="position:absolute;left:621px;top:668.0px;" width="17" height="17" viewBox="0 0 17 17"><rect x="1" y="1" width="15" height="15" rx="2" stroke="#f29766" stroke-width="1.8" fill="none"/><path d="M7 6 L5 8.5 L7 11 M10 6 L12 8.5 L10 11" stroke="#f29766" stroke-width="1.6" fill="none"/></svg>
<span style="position:absolute;left:647.00px;top:666.76px;font-size:18px;line-height:1;color:#e3e3e3;white-space:nowrap;transform:scaleX(1.0449);transform-origin:0 0;">node_modules_next_dist_client_a...</span>
<svg style="position:absolute;left:621px;top:699.5px;" width="17" height="17" viewBox="0 0 17 17"><rect x="1" y="1" width="15" height="15" rx="2" stroke="#f29766" stroke-width="1.8" fill="none"/><path d="M7 6 L5 8.5 L7 11 M10 6 L12 8.5 L10 11" stroke="#f29766" stroke-width="1.6" fill="none"/></svg>
<span style="position:absolute;left:647.00px;top:698.26px;font-size:18px;line-height:1;color:#e3e3e3;white-space:nowrap;transform:scaleX(1.0521);transform-origin:0 0;">node_modules_next_dist_4b2403f...</span>
<svg style="position:absolute;left:621px;top:731.0px;" width="17" height="17" viewBox="0 0 17 17"><rect x="1" y="1" width="15" height="15" rx="2" stroke="#f29766" stroke-width="1.8" fill="none"/><path d="M7 6 L5 8.5 L7 11 M10 6 L12 8.5 L10 11" stroke="#f29766" stroke-width="1.6" fill="none"/></svg>
<span style="position:absolute;left:647.00px;top:729.76px;font-size:18px;line-height:1;color:#e3e3e3;white-space:nowrap;transform:scaleX(1.0294);transform-origin:0 0;">node_modules_%40swc_helpers_c...</span>
<svg style="position:absolute;left:621px;top:762.5px;" width="17" height="17" viewBox="0 0 17 17"><rect x="1" y="1" width="15" height="15" rx="2" stroke="#f29766" stroke-width="1.8" fill="none"/><path d="M7 6 L5 8.5 L7 11 M10 6 L12 8.5 L10 11" stroke="#f29766" stroke-width="1.6" fill="none"/></svg>
<span style="position:absolute;left:647.00px;top:761.26px;font-size:18px;line-height:1;color:#e3e3e3;white-space:nowrap;transform:scaleX(1.0072);transform-origin:0 0;">_a0ff3932._.js</span>
<svg style="position:absolute;left:621px;top:794.0px;" width="17" height="17" viewBox="0 0 17 17"><rect x="1" y="1" width="15" height="15" rx="2" stroke="#f29766" stroke-width="1.8" fill="none"/><path d="M7 6 L5 8.5 L7 11 M10 6 L12 8.5 L10 11" stroke="#f29766" stroke-width="1.6" fill="none"/></svg>
<span style="position:absolute;left:647.00px;top:792.76px;font-size:18px;line-height:1;color:#e3e3e3;white-space:nowrap;transform:scaleX(1.0386);transform-origin:0 0;">turbopack-_376339a9._.js</span>
<svg style="position:absolute;left:621px;top:825.5px;" width="17" height="17" viewBox="0 0 17 17"><rect x="1" y="1" width="15" height="15" rx="2" stroke="#f29766" stroke-width="1.8" fill="none"/><path d="M7 6 L5 8.5 L7 11 M10 6 L12 8.5 L10 11" stroke="#f29766" stroke-width="1.6" fill="none"/></svg>
<span style="position:absolute;left:647.00px;top:824.26px;font-size:18px;line-height:1;color:#e3e3e3;white-space:nowrap;transform:scaleX(1.0459);transform-origin:0 0;">node_modules_next_dist_094231...</span>
<svg style="position:absolute;left:621px;top:857.0px;" width="17" height="17" viewBox="0 0 17 17"><rect x="1" y="1" width="15" height="15" rx="2" stroke="#f29766" stroke-width="1.8" fill="none"/><path d="M7 6 L5 8.5 L7 11 M10 6 L12 8.5 L10 11" stroke="#f29766" stroke-width="1.6" fill="none"/></svg>
<span style="position:absolute;left:647.00px;top:855.76px;font-size:18px;line-height:1;color:#e3e3e3;white-space:nowrap;transform:scaleX(1.0258);transform-origin:0 0;">src_app_favicon_ico_mjs_4800b30...</span>
<svg style="position:absolute;left:621px;top:888.5px;" width="17" height="17" viewBox="0 0 17 17"><rect x="1" y="1" width="15" height="15" rx="2" stroke="#f29766" stroke-width="1.8" fill="none"/><path d="M7 6 L5 8.5 L7 11 M10 6 L12 8.5 L10 11" stroke="#f29766" stroke-width="1.6" fill="none"/></svg>
<span style="position:absolute;left:647.00px;top:887.26px;font-size:18px;line-height:1;color:#e3e3e3;white-space:nowrap;transform:scaleX(1.0437);transform-origin:0 0;">node_modules_next_dist_client_c...</span>
<svg style="position:absolute;left:621px;top:920.0px;" width="17" height="17" viewBox="0 0 17 17"><rect x="1" y="1" width="15" height="15" rx="2" stroke="#f29766" stroke-width="1.8" fill="none"/><path d="M7 6 L5 8.5 L7 11 M10 6 L12 8.5 L10 11" stroke="#f29766" stroke-width="1.6" fill="none"/></svg>
<span style="position:absolute;left:647.00px;top:918.76px;font-size:18px;line-height:1;color:#e3e3e3;white-space:nowrap;transform:scaleX(1.0181);transform-origin:0 0;">src_app_layout_tsx_3873bb71._.js</span>
<svg style="position:absolute;left:621px;top:951.5px;" width="17" height="17" viewBox="0 0 17 17"><rect x="1" y="1" width="15" height="15" rx="2" stroke="#f29766" stroke-width="1.8" fill="none"/><path d="M7 6 L5 8.5 L7 11 M10 6 L12 8.5 L10 11" stroke="#f29766" stroke-width="1.6" fill="none"/></svg>
<span style="position:absolute;left:647.00px;top:950.26px;font-size:18px;line-height:1;color:#e3e3e3;white-space:nowrap;transform:scaleX(1.0384);transform-origin:0 0;">%5Bturbopack%5D_browser_dev_...</span>
<svg style="position:absolute;left:621px;top:983.0px;" width="17" height="17" viewBox="0 0 17 17"><rect x="1" y="1" width="15" height="15" rx="2" stroke="#f29766" stroke-width="1.8" fill="none"/><path d="M7 6 L5 8.5 L7 11 M10 6 L12 8.5 L10 11" stroke="#f29766" stroke-width="1.6" fill="none"/></svg>
<span style="position:absolute;left:647.00px;top:981.76px;font-size:18px;line-height:1;color:#e3e3e3;white-space:nowrap;transform:scaleX(1.0384);transform-origin:0 0;">%5Bturbopack%5D_browser_dev_...</span>
<div style="position:absolute;left:612px;top:992px;width:364px;height:39px;background:#282828;"></div>
<div style="position:absolute;left:612px;top:992px;width:364px;height:1px;background:#5e5e5e;"></div>
<span style="position:absolute;left:627.00px;top:1003.76px;font-size:18px;line-height:1;color:#e3e3e3;white-space:nowrap;transform:scaleX(1.0123);transform-origin:0 0;">27 个请求</span>
<div style="position:absolute;left:721px;top:1001px;width:2px;height:22px;background:#5a5a5a;"></div>
<span style="position:absolute;left:737.00px;top:1003.76px;font-size:18px;line-height:1;color:#e3e3e3;white-space:nowrap;transform:scaleX(1.0083);transform-origin:0 0;">已传输 739 kB</span>
<div style="position:absolute;left:867px;top:1001px;width:2px;height:22px;background:#5a5a5a;"></div>
<div style="position:absolute;left:882px;top:995px;width:94px;height:36px;overflow:hidden">
<span style="position:absolute;left:0.00px;top:8.76px;font-size:18px;line-height:1;color:#e3e3e3;white-space:nowrap;transform:scaleX(1.0342);transform-origin:0 0;">3.3 MB 项资源</span>
</div>
<div style="position:absolute;left:962px;top:399px;width:14px;height:593px;background:#202020;"></div>
<svg style="position:absolute;left:963px;top:403px;" width="11" height="9" viewBox="0 0 11 9"><path d="M5.5 1 L10.5 8 H0.5 Z" fill="#9e9e9e"/></svg>
<div style="position:absolute;left:964px;top:418px;width:9px;height:370px;background:#9e9e9e;border-radius:5px;"></div>
<svg style="position:absolute;left:963px;top:979px;" width="11" height="9" viewBox="0 0 11 9"><path d="M5.5 8 L10.5 1 H0.5 Z" fill="#9e9e9e"/></svg>
<div style="position:absolute;left:976px;top:399px;width:1px;height:632px;background:#5e5e5e;"></div>
<div style="position:absolute;left:977px;top:399px;width:936px;height:41px;background:#3c3c3c;"></div>
<div style="position:absolute;left:977px;top:440px;width:936px;height:1px;background:#5e5e5e;"></div>
<svg style="position:absolute;left:999px;top:410px;" width="18" height="18" viewBox="0 0 18 18"><path d="M2 2 L16 16 M16 2 L2 16" stroke="#c7c7c7" stroke-width="2"/></svg>
<span style="position:absolute;left:1046.00px;top:410.76px;font-size:18px;line-height:1;color:#e3e3e3;white-space:nowrap;transform:scaleX(1.0000);transform-origin:0 0;">标头</span>
<span style="position:absolute;left:1112.00px;top:410.76px;font-size:18px;line-height:1;color:#a8c7fa;white-space:nowrap;transform:scaleX(1.0000);transform-origin:0 0;">预览</span>
<span style="position:absolute;left:1178.00px;top:410.76px;font-size:18px;line-height:1;color:#e3e3e3;white-space:nowrap;transform:scaleX(1.0000);transform-origin:0 0;">响应</span>
<span style="position:absolute;left:1243.00px;top:410.76px;font-size:18px;line-height:1;color:#e3e3e3;white-space:nowrap;transform:scaleX(1.0185);transform-origin:0 0;">启动器</span>
<span style="position:absolute;left:1329.00px;top:410.76px;font-size:18px;line-height:1;color:#e3e3e3;white-space:nowrap;transform:scaleX(1.0000);transform-origin:0 0;">时间</span>
<span style="position:absolute;left:1394.00px;top:410.76px;font-size:18px;line-height:1;color:#e3e3e3;white-space:nowrap;transform:scaleX(1.0530);transform-origin:0 0;">Cookie</span>
<div style="position:absolute;left:1097px;top:437px;width:66px;height:4px;background:#a8c7fa;border-radius:3px 3px 0 0;"></div>
<div style="position:absolute;left:1006px;top:469px;width:879px;height:534px;background:#ffffff;"></div>
<div style="position:absolute;left:1006px;top:469px;width:879px;height:534px;overflow:hidden">
<span style="position:absolute;left:14.00px;top:-20.82px;font-size:24px;line-height:1;color:#000;white-space:nowrap;transform:scaleX(1.0000);transform-origin:0 0;">不是好肉-500</span>
<span style="position:absolute;left:14.00px;top:14.18px;font-size:24px;line-height:1;color:#000;white-space:nowrap;transform:scaleX(1.0000);transform-origin:0 0;">沙茶酱-20</span>
<span style="position:absolute;left:14.00px;top:49.18px;font-size:24px;line-height:1;color:#000;white-space:nowrap;transform:scaleX(1.0000);transform-origin:0 0;">酸奶-5</span>
<span style="position:absolute;left:14.00px;top:84.18px;font-size:24px;line-height:1;color:#000;white-space:nowrap;transform:scaleX(1.0000);transform-origin:0 0;">不好意思-1</span>
<span style="position:absolute;left:14.00px;top:119.18px;font-size:24px;line-height:1;color:#000;white-space:nowrap;transform:scaleX(1.0000);transform-origin:0 0;">胡来的左手-1</span>
<span style="position:absolute;left:14.00px;top:154.18px;font-size:24px;line-height:1;color:#000;white-space:nowrap;transform:scaleX(1.0000);transform-origin:0 0;">胡来的右手-4</span>
<span style="position:absolute;left:14.00px;top:189.18px;font-size:24px;line-height:1;color:#000;white-space:nowrap;transform:scaleX(1.0000);transform-origin:0 0;">拉拉-1</span>
<span style="position:absolute;left:14.00px;top:224.18px;font-size:24px;line-height:1;color:#000;white-space:nowrap;transform:scaleX(1.0000);transform-origin:0 0;">水鬼1-1</span>
<span style="position:absolute;left:14.00px;top:259.18px;font-size:24px;line-height:1;color:#000;white-space:nowrap;transform:scaleX(1.0000);transform-origin:0 0;">肉肉-1</span>
<span style="position:absolute;left:14.00px;top:294.18px;font-size:24px;line-height:1;color:#000;white-space:nowrap;transform:scaleX(1.0000);transform-origin:0 0;">鹏鹏-123</span>
<span style="position:absolute;left:14.00px;top:329.18px;font-size:24px;line-height:1;color:#000;white-space:nowrap;transform:scaleX(1.0000);transform-origin:0 0;">肉肉copy-2</span>
<span style="position:absolute;left:14.00px;top:364.18px;font-size:24px;line-height:1;color:#000;white-space:nowrap;transform:scaleX(1.0000);transform-origin:0 0;">肉肉copy2-1</span>
<span style="position:absolute;left:14.00px;top:399.18px;font-size:24px;line-height:1;color:#000;white-space:nowrap;transform:scaleX(1.0000);transform-origin:0 0;">三明治-20</span>
<span style="position:absolute;left:14.00px;top:434.18px;font-size:24px;line-height:1;color:#000;white-space:nowrap;transform:scaleX(1.0000);transform-origin:0 0;">肉肉-20</span>
<span style="position:absolute;left:14.00px;top:469.18px;font-size:24px;line-height:1;color:#000;white-space:nowrap;transform:scaleX(1.0000);transform-origin:0 0;">1-1</span>
<span style="position:absolute;left:14.00px;top:504.18px;font-size:24px;line-height:1;color:#000;white-space:nowrap;transform:scaleX(1.0000);transform-origin:0 0;">11-1</span>
</div>
<svg style="position:absolute;left:1873px;top:474px;" width="11" height="9" viewBox="0 0 11 9"><path d="M5.5 1 L10.5 8 H0.5 Z" fill="#9e9e9e"/></svg>
<div style="position:absolute;left:1873px;top:655px;width:9px;height:222px;background:#8f8f8f;border-radius:5px;"></div>
<div style="position:absolute;left:994px;top:411px;width:339px;height:592px;background:transparent;border:7px solid #fd3a3c;box-sizing:border-box;"></div>
<div style="position:absolute;left:1606px;top:960px;width:279px;height:43px;overflow:hidden">
<span style="position:absolute;left:20.00px;top:15.99px;font-size:26px;line-height:1;color:#a8a8a8;white-space:nowrap;transform:scaleX(0.9424);transform-origin:0 0;text-shadow:1px 1px 1px #444,0.5px 0.5px 0 #666,-1px -1px 0 #fff;">掘金技术社区 @ 小满zs</span>
</div>
</body></html>
